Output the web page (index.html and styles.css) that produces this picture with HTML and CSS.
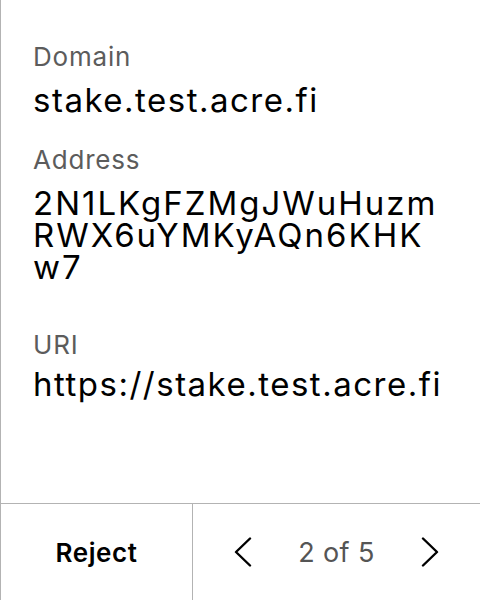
FILE: index.html
```html
<!DOCTYPE html>
<html lang="en">
<head>
<meta charset="utf-8">
<title>Sign message</title>
<link rel="stylesheet" href="styles.css">
</head>
<body>
<div class="screen">
  <div class="content">
    <div class="field">
      <div class="label">Domain</div>
      <div class="value">stake.test.acre.fi</div>
    </div>
    <div class="field field-wide">
      <div class="label">Address</div>
      <div class="value value-address">2N1LKgFZMgJWuHuzmRWX6uYMKyAQn6KHKw7</div>
    </div>
    <div class="field field-tight">
      <div class="label">URI</div>
      <div class="value">https://stake.test.acre.fi</div>
    </div>
  </div>
  <div class="actions">
    <div class="reject">Reject</div>
    <div class="pager">
      <svg class="chev" viewBox="0 0 20 30" width="20" height="30" aria-hidden="true"><path d="M17 1.5 L3 15 L17 28.5" /></svg>
      <span class="count">2 of 5</span>
      <svg class="chev" viewBox="0 0 20 30" width="20" height="30" aria-hidden="true"><path d="M3 1.5 L17 15 L3 28.5" /></svg>
    </div>
  </div>
</div>
</body>
</html>
```

FILE: styles.css
```css
html, body {
  margin: 0;
  padding: 0;
  background: #ffffff;
}

.screen {
  box-sizing: border-box;
  width: 480px;
  height: 600px;
  border-left: 1px solid #b3b3b3;
  display: flex;
  flex-direction: column;
  font-family: "Inter", "Noto Sans", sans-serif;
  color: #000000;
}

.content {
  flex: 1;
  padding: 41px 32px 0 32px;
  display: flex;
  flex-direction: column;
  gap: 28px;
}

.field {
  display: flex;
  flex-direction: column;
  gap: 11px;
}

.field-wide {
  margin-bottom: 18px;
}

.field-tight {
  gap: 7px;
}

.label {
  font-size: 26px;
  line-height: 32px;
  letter-spacing: 0.8px;
  color: #5c5c5c;
}

.value {
  font-size: 33px;
  line-height: 32px;
  letter-spacing: 1.5px;
  color: #000000;
  word-break: break-all;
}

.value-address {
  letter-spacing: 2px;
}

.actions {
  height: 96px;
  border-top: 1px solid #b3b3b3;
  display: grid;
  grid-template-columns: 191px 1fr;
}

.reject {
  display: flex;
  align-items: center;
  justify-content: center;
  font-size: 26px;
  font-weight: 600;
  letter-spacing: 0.6px;
  color: #000000;
}

.pager {
  border-left: 1px solid #b3b3b3;
  display: flex;
  align-items: center;
  justify-content: space-between;
  padding: 0 40px 0 40px;
}

.count {
  font-size: 27px;
  letter-spacing: 0.4px;
  color: #555555;
}

.chev {
  display: block;
}

.chev path {
  fill: none;
  stroke: #000000;
  stroke-width: 2.4;
  stroke-linecap: round;
  stroke-linejoin: round;
}
```
